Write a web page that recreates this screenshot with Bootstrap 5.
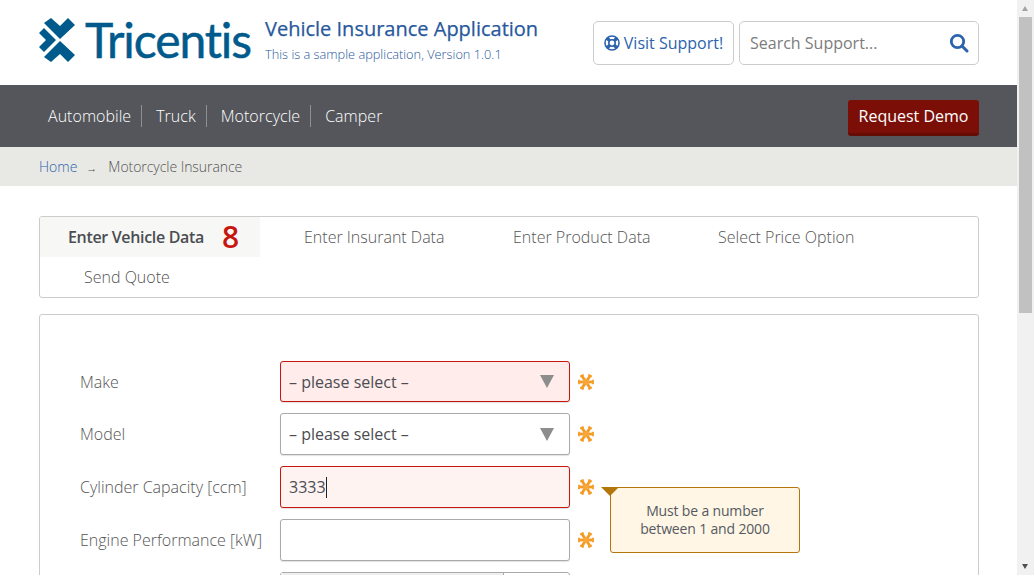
<!DOCTYPE html>
<html lang="en">
<head>
<meta charset="utf-8">
<title>Vehicle Insurance Application</title>
<link href="https://cdn.jsdelivr.net/npm/bootstrap@5.3.0/dist/css/bootstrap.min.css" rel="stylesheet">
<style>
html,body{height:100%;overflow:hidden}
body{font-family:"Open Sans",sans-serif;color:#555a62;background:#fff}
.page-wrap{width:1017px}
.inner{width:940px;margin-left:39px}
.site-head{height:85px}
.logo-box{width:213px;height:44px;margin-top:18px;gap:10px}
.logo-box svg{flex-shrink:0}
.logo-word{font-family:"Lato",sans-serif;font-size:48px;line-height:44px;letter-spacing:-1.1px;color:#005a8c;font-weight:400;-webkit-text-stroke:.5px #005a8c}
.title-col{width:323px;margin-left:13px}
.app-title{font-size:20px;line-height:27px;color:#27589c;margin:15px 0 0;font-weight:400;-webkit-text-stroke:.25px #27589c}
.app-sub{font-size:12.77px;line-height:17px;color:#27589c;margin:4px 0 0;font-weight:300}
.head-tools{gap:5px;margin-top:21px}
.support-btn{height:44px;width:141px;border:1px solid #ccc;border-radius:5px;color:#2b63ad;font-size:16px;background:#fff;padding:0;gap:4px;text-decoration:none}
.search-box{height:44px;width:240px;border:1px solid #ccc;border-radius:5px;padding:0 9px 0 10px;background:#fff}
.search-text{font-size:16px;color:#7c7c7c}
.main-nav{height:62px;background:#54565b}
.nav-item-x{color:#fff;font-size:16px;line-height:22px;padding:0 10px 0 14px;border-right:1px solid #8d8f93;text-decoration:none;font-weight:300;letter-spacing:.03px}
.nav-item-x:first-child{padding-left:9px}
.nav-item-x:last-child{border-right:0}
.demo-btn{width:131px;height:36px;margin-top:4px;background:#7b0f07;border:0;border-bottom:3px solid #650c05;border-radius:3px;color:#fff;font-size:16px;padding:0;line-height:31px}
.crumbs{height:39px;background:#e8e8e4;font-size:14px;font-weight:300}
.crumbs a{color:#2b63ad;text-decoration:none}
.crumb-arrow{font-size:11px;color:#555;margin:0 11px 0 9px;position:relative;top:2px}
.crumb-now{color:#555;letter-spacing:-.05px}
.tabs-box{margin-top:30px;height:82px;border:1px solid #ccc;border-radius:3px;overflow:hidden}
.tab-x{height:40px;font-size:16px;color:#555;padding-left:44px;white-space:nowrap;line-height:40px;font-weight:300}
.tab-on{width:220px;background:#f7f7f5;padding-left:28px;color:#4a4d52;font-weight:600;gap:18px;display:flex;letter-spacing:-.33px}
.tab-count{font-size:30px;color:#c8150d;font-weight:600;line-height:40px;letter-spacing:0}
.form-box{margin-top:16px;height:400px;border:1px solid #ccc;border-radius:3px;padding:46px 40px 0}
.field-row{height:42px;margin-bottom:11px}
.field-row:first-child{height:41px}
.field-label{width:200px;font-size:16px;color:#555;font-weight:300}
.field-ctl{width:290px;height:100%;border:1px solid #aaa;border-radius:3px;font-size:16px;color:#4a4d52;padding:0 8px;background:#fff;box-shadow:0 1px 1px rgba(0,0,0,.12)}
.ctl-bad{border-color:#c8150d;background:#ffeceb}
.ctl-bad2{background:#fff3f2}
.caret-x{width:0;height:0;border-left:7px solid transparent;border-right:7px solid transparent;border-top:13px solid #8d8d8d;margin-right:7px}
.cursor-x{display:inline-block;width:1px;height:21px;background:#222;vertical-align:-5px}
.req-mark{width:16px;height:16px;margin-left:8px}
.tip-x{position:absolute;left:610px;top:487px;width:190px;height:66px;background:#fff6e5;border:1px solid #b3760b;border-radius:3px;font-size:14px;line-height:18px;letter-spacing:-.16px;color:#555a62;text-align:center;padding-top:14px;z-index:2}
.tip-x::before{content:"";position:absolute;left:-10px;top:-1px;border-left:9px solid transparent;border-right:9px solid transparent;border-top:9px solid #b3760b}
.split-ctl{width:290px;height:42px;border:1px solid #aaa;border-radius:3px;background:#fff;display:flex}
.split-left{width:223px;background:#efefef;border-right:1px solid #aaa}
.fake-bar{position:fixed;top:0;right:0;width:17px;height:575px;background:#f1f1f1}
.fake-thumb{position:absolute;left:2px;width:13px;top:17px;height:296px;background:#c1c1c1}
.bar-up,.bar-down{position:absolute;left:5px;border-left:3.5px solid transparent;border-right:3.5px solid transparent}
.bar-up{top:6px;border-bottom:5px solid #a3a3a3}
.bar-down{bottom:6px;border-top:5px solid #505050}
</style>
</head>
<body>
<div class="page-wrap">
  <header class="site-head">
    <div class="inner d-flex">
      <a class="logo-box d-flex align-items-center text-decoration-none" href="#">
        <svg width="36" height="44" viewBox="0 0 36 44" aria-hidden="true"><g fill="#005a8c"><polygon points="12,0 21,8 29,0 36,7 21,21 5,5"/><polygon points="0,15 5,10 17,22 5,34 0,29 7,22"/><polygon points="12,44 21,36 29,44 36,37 21,23 5,39"/></g></svg>
        <span class="logo-word">Tricentis</span>
      </a>
      <div class="title-col">
        <h1 class="app-title">Vehicle Insurance Application</h1>
        <p class="app-sub">This is a sample application, Version 1.0.1</p>
      </div>
      <div class="head-tools d-flex ms-auto">
        <a class="support-btn d-flex align-items-center justify-content-center" href="#">
          <svg width="16" height="16" viewBox="0 0 16 16" aria-hidden="true"><g fill="none" stroke="#2b63ad"><circle cx="8" cy="8" r="7" stroke-width="1.6"/><circle cx="8" cy="8" r="3.2" stroke-width="1.6"/><g stroke-width="3.4"><line x1="3" y1="3" x2="5.6" y2="5.6"/><line x1="13" y1="3" x2="10.4" y2="5.6"/><line x1="3" y1="13" x2="5.6" y2="10.4"/><line x1="13" y1="13" x2="10.4" y2="10.4"/></g></g></svg>
          <span>Visit Support!</span>
        </a>
        <div class="search-box d-flex align-items-center justify-content-between">
          <span class="search-text">Search Support...</span>
          <svg width="20" height="20" viewBox="0 0 20 20" aria-hidden="true"><circle cx="8.5" cy="8.5" r="6.2" fill="none" stroke="#2b63ad" stroke-width="2.8"/><line x1="13" y1="13" x2="18" y2="18" stroke="#2b63ad" stroke-width="3" stroke-linecap="round"/></svg>
        </div>
      </div>
    </div>
  </header>
  <nav class="main-nav">
    <div class="inner d-flex align-items-center justify-content-between h-100">
      <div class="d-flex"><a class="nav-item-x" href="#">Automobile</a><a class="nav-item-x" href="#">Truck</a><a class="nav-item-x" href="#">Motorcycle</a><a class="nav-item-x" href="#">Camper</a></div>
      <button class="demo-btn" type="button">Request Demo</button>
    </div>
  </nav>
  <div class="crumbs"><div class="inner d-flex align-items-center h-100"><a href="#">Home</a><span class="crumb-arrow">→</span><span class="crumb-now">Motorcycle Insurance</span></div></div>
  <div class="inner">
    <div class="tabs-box d-flex flex-wrap">
      <div class="tab-x tab-on"><span>Enter Vehicle Data</span><span class="tab-count">8</span></div>
      <div class="tab-x" style="width:209px">Enter Insurant Data</div>
      <div class="tab-x" style="width:205px">Enter Product Data</div>
      <div class="tab-x" style="width:240px">Select Price Option</div>
      <div class="tab-x">Send Quote</div>
    </div>
    <div class="form-box">
      <div class="field-row d-flex align-items-center"><label class="field-label">Make</label><div class="field-ctl ctl-bad d-flex align-items-center justify-content-between"><span>– please select –</span><span class="caret-x"></span></div><svg class="req-mark" viewBox="0 0 16 16"><use href="#star"/></svg></div>
      <div class="field-row d-flex align-items-center"><label class="field-label">Model</label><div class="field-ctl d-flex align-items-center justify-content-between"><span>– please select –</span><span class="caret-x"></span></div><svg class="req-mark" viewBox="0 0 16 16"><use href="#star"/></svg></div>
      <div class="field-row d-flex align-items-center"><label class="field-label">Cylinder Capacity [ccm]</label><div class="field-ctl ctl-bad ctl-bad2 d-flex align-items-center"><span>3333<span class="cursor-x"></span></span></div><svg class="req-mark" viewBox="0 0 16 16"><use href="#star"/></svg></div>
      <div class="field-row d-flex align-items-center"><label class="field-label">Engine Performance [kW]</label><div class="field-ctl"></div><svg class="req-mark" viewBox="0 0 16 16"><use href="#star"/></svg></div>
      <div class="field-row d-flex align-items-center"><label class="field-label">&nbsp;</label><div class="split-ctl"><div class="split-left"></div></div></div>
    </div>
  </div>
</div>
<div class="tip-x">Must be a number<br>between 1 and 2000</div>
<svg width="0" height="0" class="position-absolute"><defs><g id="star"><g stroke="#f59a23" stroke-width="2.8" fill="none"><line x1="1.5" y1="8" x2="14.5" y2="8"/><line x1="4" y1="2" x2="12" y2="14"/><line x1="12" y1="2" x2="4" y2="14"/><line x1="1" y1="5.8" x2="1" y2="10.2" stroke-width="1.8"/><line x1="15" y1="5.8" x2="15" y2="10.2" stroke-width="1.8"/><line x1="2.2" y1="2.6" x2="5.6" y2="0.6" stroke-width="1.8"/><line x1="10.4" y1="0.6" x2="13.8" y2="2.6" stroke-width="1.8"/><line x1="2.2" y1="13.4" x2="5.6" y2="15.4" stroke-width="1.8"/><line x1="10.4" y1="15.4" x2="13.8" y2="13.4" stroke-width="1.8"/></g><circle cx="8" cy="8" r="2.8" fill="#f9a63c"/></g></defs></svg>
<div class="fake-bar"><span class="bar-up"></span><div class="fake-thumb"></div><span class="bar-down"></span></div>
</body>
</html>
